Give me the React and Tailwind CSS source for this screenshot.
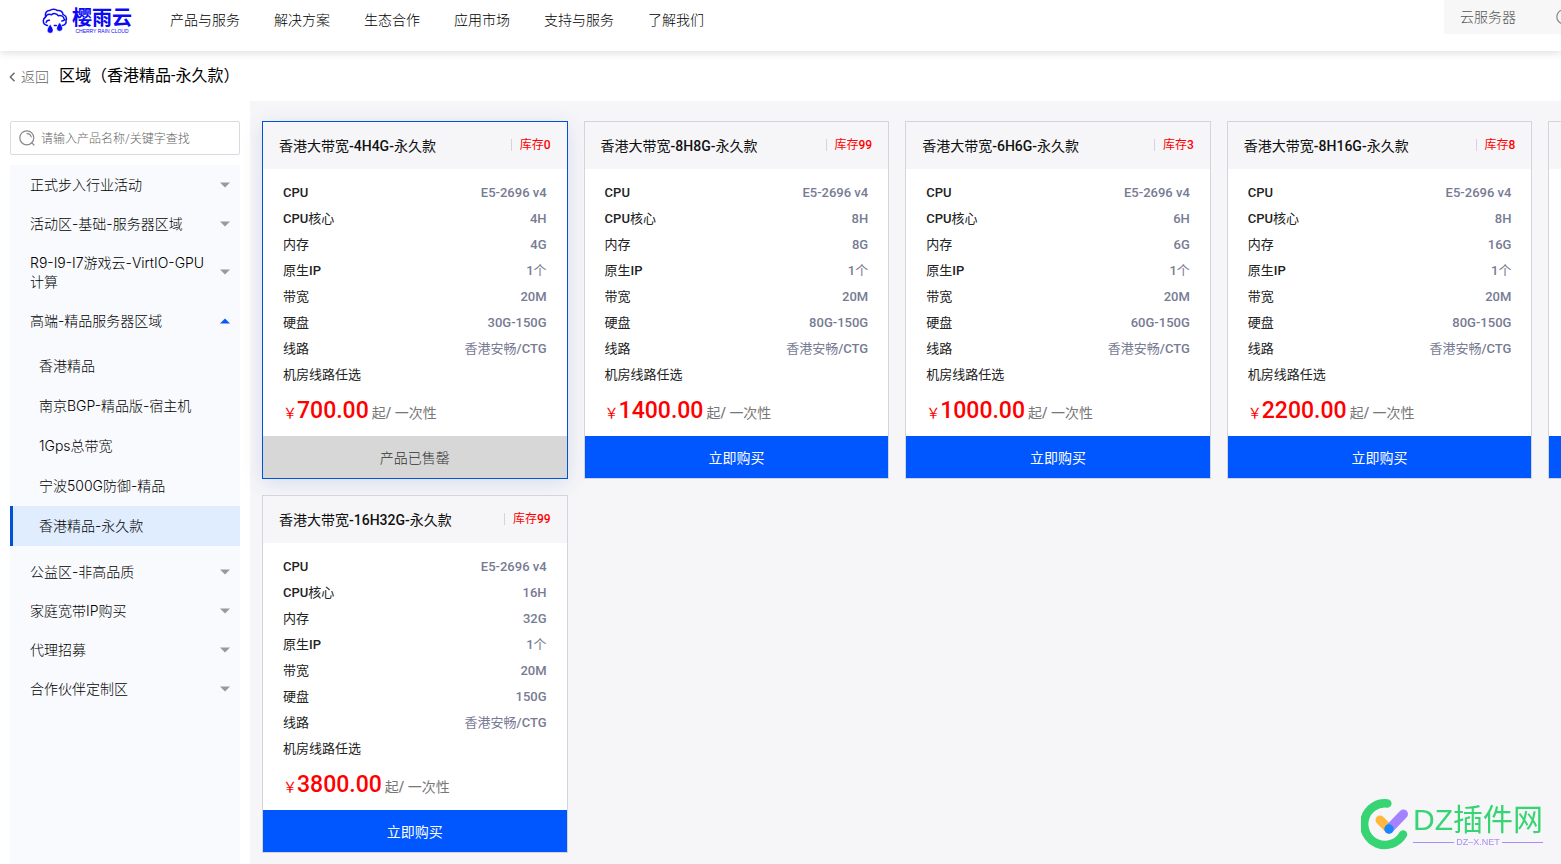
import React, { useState } from 'react'
import clsx from 'clsx'

const NAV = ['产品与服务', '解决方案', '生态合作', '应用市场', '支持与服务', '了解我们']

const GROUPS = [
  { name: '正式步入行业活动' },
  { name: '活动区-基础-服务器区域' },
  { name: 'R9-I9-I7游戏云-VirtIO-GPU计算' },
  { name: '高端-精品服务器区域', children: ['香港精品', '南京BGP-精品版-宿主机', '1Gps总带宽', '宁波500G防御-精品', '香港精品-永久款'] },
  { name: '公益区-非高品质' },
  { name: '家庭宽带IP购买' },
  { name: '代理招募' },
  { name: '合作伙伴定制区' },
]

const PRODUCTS = [
  { name: '4H4G', stock: 0, core: '4H', ram: '4G', disk: '30G-150G', price: '700.00' },
  { name: '8H8G', stock: 99, core: '8H', ram: '8G', disk: '80G-150G', price: '1400.00' },
  { name: '6H6G', stock: 3, core: '6H', ram: '6G', disk: '60G-150G', price: '1000.00' },
  { name: '8H16G', stock: 8, core: '8H', ram: '16G', disk: '80G-150G', price: '2200.00' },
  null,
  { name: '16H32G', stock: 99, core: '16H', ram: '32G', disk: '150G', price: '3800.00' },
]

function Logo() {
  return (
    <a href="#" className="flex items-center gap-1 pt-[2px] text-[#0a0af5]">
      <svg viewBox="0 0 26 26" className="h-[26px] w-[26px]" fill="none" stroke="currentColor" strokeWidth="1.500" strokeLinecap="round" strokeLinejoin="round">
        <path d="M5.500 17.500C2.800 17 1.300 15.200 1.300 13c0-1.800 1-3.200 2.300-4C2.500 5 4.800 2.500 7.800 2.600 9.500.8 13.500.6 15.500 2.600c3.200-.6 5.300 1.400 5.500 4 3 .8 4.200 3.600 3 6 .6 2.600-1.200 4.900-4 4.900" />
        <path d="M3.600 9c1.100-2.300 3.600-3.300 6-2.300 2-1.800 5.400-1.300 6.500 1.100 2.600-1 5.200.3 5.900 2.700M4.200 14.500c.2-1.500 1.600-2.500 3.300-2.300M19.800 13c1.400 0 2.400-.5 3.200-1.400M12.300 17.500h2" />
        <path d="M8.200 16.200c2 2.900 2.900 4.500 2.900 6.100a2.900 2.900 0 0 1-5.800 0c0-1.600.9-3.200 2.900-6.100ZM17.600 14.500c2 2.800 2.900 4.300 2.900 5.800a2.900 2.900 0 0 1-5.800 0c0-1.500.9-3 2.900-5.800Z" fill="currentColor" stroke="#fff" strokeWidth=".5" />
      </svg>
      <span className="flex flex-col items-center">
        <span className="text-[20px] leading-5 font-bold">樱雨云</span>
        <span className="font-['Liberation_Sans'] text-[5px] leading-[6px] whitespace-nowrap">CHERRY RAIN CLOUD</span>
      </span>
    </a>
  )
}

function SearchIcon({ className }) {
  return (
    <svg viewBox="0 0 16 16" className={className} fill="none" stroke="currentColor" strokeWidth="1.2" strokeLinecap="round">
      <circle cx="7.800" cy="7.800" r="7" />
      <path d="M12.800 12.800 15 15M8 3.600c2 0 3.800 1.400 4.200 3.400" />
    </svg>
  )
}

function Header() {
  return (
    <header className="relative z-10 flex h-[51px] items-start bg-white pl-[42px] shadow-[0_2px_8px_rgba(0,0,0,0.13)]">
      <div className="mr-[38px] flex h-10 items-center">
        <Logo />
      </div>
      <nav className="flex h-10 flex-1 items-center gap-[34px] text-sm font-light whitespace-nowrap text-black">
        {NAV.map((n) => <a key={n} href="#">{n}</a>)}
      </nav>
      <label className="flex h-[34px] items-center bg-[#f7f7f7] pl-4 text-[#888]">
        <input type="text" aria-label="搜索" placeholder="云服务器" className="w-24 text-sm font-light outline-none placeholder:text-[#555]" />
        <SearchIcon className="-mr-[11px] h-4 w-4" />
      </label>
    </header>
  )
}

function Sidebar({ active, onSelect }) {
  return (
    <aside className="flex w-[230px] shrink-0 flex-col gap-[10px] pt-5">
      <label className="flex h-[34px] items-center gap-[6px] rounded-xs border border-[#d9dbe3] bg-white px-2 text-[#888]">
        <SearchIcon className="h-4 w-4" />
        <input type="text" aria-label="搜索产品" placeholder="请输入产品名称/关键字查找" className="min-w-0 flex-1 pt-[2px] text-xs font-light outline-none placeholder:text-[#666]" />
      </label>
      <div className="flex-1 bg-[#f8fafd] font-[Inter,'Noto_Sans_CJK_SC',sans-serif] text-sm leading-[19px] font-light text-black">
        {GROUPS.map((g) => (
          <div key={g.name}>
            <button type="button" className="flex w-full items-center justify-between py-[10px] pr-[10px] pl-5 text-left">
              <span className="w-[184px]">{g.name}</span>
              <svg viewBox="0 0 10 6" className={clsx('h-[6px] w-[10px] shrink-0', g.children ? 'text-[#0a57fb]' : 'text-[#999]')}>
                <path d={g.children ? 'M5 .5 10 5.500H0Z' : 'M0 .5h10L5 5.500Z'} fill="currentColor" />
              </svg>
            </button>
            {g.children && (
              <div className="py-[6px]">
                {g.children.map((c) => (
                  <button
                    key={c}
                    type="button"
                    onClick={() => onSelect(c)}
                    className={clsx('block h-10 w-full border-l-3 pb-[2px] pl-[26px] text-left', c === active ? 'border-[#0052d9] bg-[#e0edff]' : 'border-transparent')}
                  >
                    {c}
                  </button>
                ))}
              </div>
            )}
          </div>
        ))}
      </div>
    </aside>
  )
}

function ProductCard({ product }) {
  if (!product) {
    return (
      <article className="flex flex-col border border-[#d3d5dc] bg-white">
        <div className="h-[47px] bg-[#f6f6f8]" />
        <div className="flex-1" />
        <div className="h-[42px] bg-[#0057ff]" />
      </article>
    )
  }
  const soldOut = product.stock === 0
  const specs = [
    ['CPU', 'E5-2696 v4'],
    ['CPU核心', product.core],
    ['内存', product.ram],
    ['原生IP', '1个'],
    ['带宽', '20M'],
    ['硬盘', product.disk],
    ['线路', '香港安畅/CTG'],
    ['机房线路任选', ''],
  ]
  return (
    <article className={clsx('border bg-white', soldOut ? 'border-[#0052d9] shadow-[0_4px_20px_rgba(0,40,140,0.12)]' : 'border-[#d3d5dc]')}>
      <header className="flex h-[47px] items-center justify-between bg-[#f6f6f8] px-4">
        <h2 className="text-sm text-[#111]"><Mixed text={`香港大带宽-${product.name}-永久款`} /></h2>
        <span className="flex items-center gap-2 pb-[2px] text-xs text-[#f00]">
          <i className="h-3 w-px bg-[#d3d5dc]" />
          <span>库存<b className="font-medium">{product.stock}</b></span>
        </span>
      </header>
      <dl className="px-5 pt-[11px] text-[13px] leading-[26px]">
        {specs.map(([k, v]) => (
          <div key={k} className="flex justify-between">
            <dt className="text-[#222]"><Mixed text={k} /></dt>
            <dd className="text-[#777b93]"><Mixed text={v} /></dd>
          </div>
        ))}
      </dl>
      <p className="flex h-12 items-baseline px-5 pt-[7px] text-[#f00]">
        <span className="text-sm">￥</span>
        <b className="text-[23px] leading-8 font-medium">{product.price}</b>
        <span className="ml-[3px] text-sm text-[#777]"><Mixed text="起/ 一次性" /></span>
      </p>
      <button
        type="button"
        disabled={soldOut}
        className={clsx('h-[42px] w-full pt-px text-sm', soldOut ? 'bg-[#d7d7d7] font-light text-[#333]' : 'bg-[#0057ff] text-white')}
      >
        {soldOut ? '产品已售罄' : '立即购买'}
      </button>
    </article>
  )
}

// latin runs are set in medium, chinese runs in regular
function Mixed({ text }) {
  return text.split(/([\x20-\x7e]+)/).filter(Boolean).map((part, i) => (
    <span key={i} className={/^[\x20-\x7e]/.test(part) ? 'font-medium' : 'font-normal'}>{part}</span>
  ))
}

function SiteMark() {
  return (
    <div className="fixed right-[18px] bottom-[14px] flex items-center gap-1">
      <svg viewBox="0 0 48 52" className="h-[52px] w-12" fill="none" strokeLinecap="round">
        <path d="M26.300 5.500A20.800 20.800 0 1 0 42 36.500" stroke="#36d472" strokeWidth="8.500" />
        <path d="M19 22l9 9" stroke="#ffb83d" strokeWidth="9" />
        <path d="M28 31 42.500 16" stroke="#a482ff" strokeWidth="9" />
        <circle cx="28" cy="31" r="4.700" fill="#1787fb" />
      </svg>
      <div>
        <div className="text-[30px] leading-9 whitespace-nowrap text-[#36d472]">
          <span className="font-['Liberation_Sans']">DZ</span>插件网
        </div>
        <div className="flex items-center gap-[2px] text-[#a98df5]">
          <i className="h-px flex-1 bg-current" />
          <span className="font-['Liberation_Sans'] text-[9px] leading-[8px]">DZ–X.NET</span>
          <i className="h-px flex-1 bg-current" />
        </div>
      </div>
    </div>
  )
}

export default function App() {
  const [active, setActive] = useState('香港精品-永久款')

  return (
    <div className="flex min-h-screen flex-col overflow-x-hidden bg-white font-[Roboto,'Noto_Sans_CJK_SC',sans-serif]">
      <Header />
      <div className="flex h-[50px] items-center gap-[10px] pl-2">
        <a href="#" className="flex items-center gap-1 pt-[2px] text-sm font-light text-[#666]">
          <svg viewBox="0 0 9 10" className="h-[10px] w-[9px]" fill="none" stroke="#666" strokeWidth="1.400">
            <path d="M6.500.8 2.300 5l4.200 4.200" />
          </svg>
          返回
        </a>
        <h1 className="text-base text-black">区域（{active}）</h1>
      </div>
      <div className="flex flex-1 gap-[10px] pl-[10px]">
        <Sidebar active={active} onSelect={setActive} />
        <main className="min-w-0 flex-1 bg-[#f6f6f9] py-5 pl-3">
          <div className="grid w-[1592px] auto-rows-[358px] grid-cols-5 gap-4">
            {PRODUCTS.map((p, i) => <ProductCard key={i} product={p} />)}
          </div>
        </main>
      </div>
      <SiteMark />
    </div>
  )
}
